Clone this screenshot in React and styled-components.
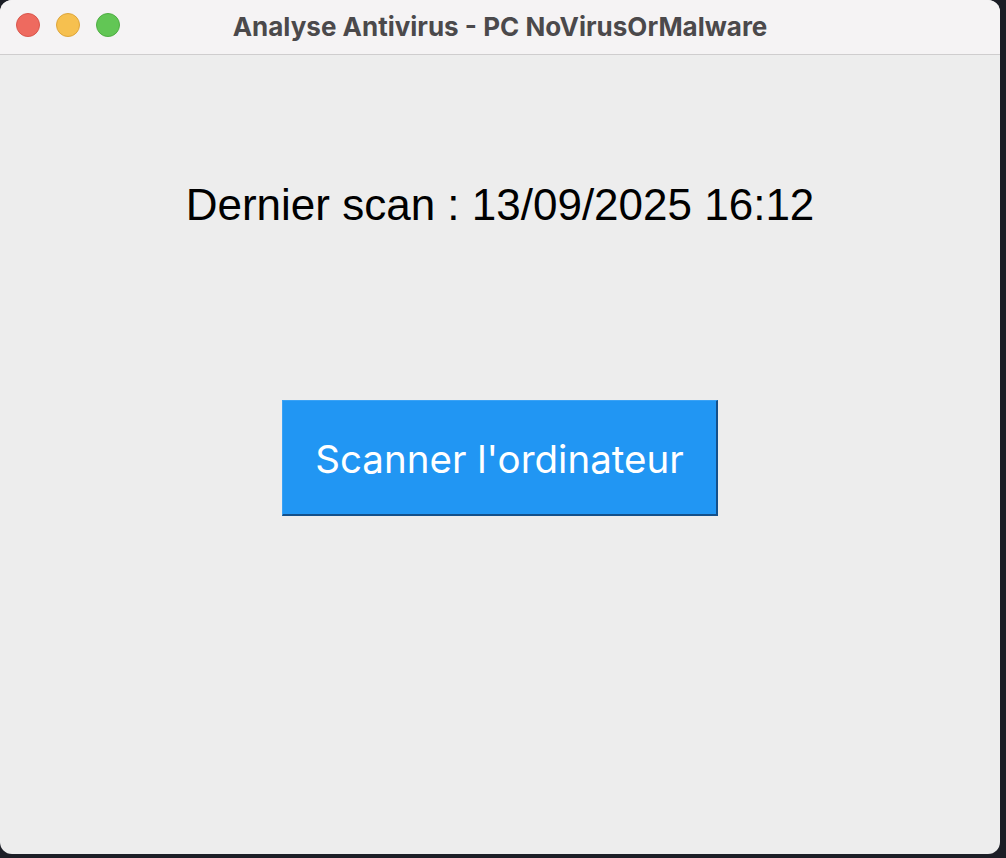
import styled, { createGlobalStyle } from 'styled-components';

const GlobalStyle = createGlobalStyle`
  html, body {
    margin: 0;
    padding: 0;
    background: #1c1e26;
  }
  body {
    width: 1006px;
    height: 858px;
    overflow: hidden;
  }
`;

const Window = styled.div`
  width: 1000px;
  height: 854px;
  border-radius: 12px;
  overflow: hidden;
  background: #ededed;
  display: flex;
  flex-direction: column;
`;

const TitleBar = styled.div`
  height: 54px;
  flex-shrink: 0;
  background: #f5f3f4;
  border-bottom: 1px solid #cfcdce;
  position: relative;
  display: flex;
  align-items: center;
  justify-content: center;
`;

const Lights = styled.div`
  position: absolute;
  left: 16px;
  top: 13px;
  display: flex;
  gap: 16px;
`;

const Light = styled.span`
  width: 24px;
  height: 24px;
  border-radius: 50%;
  box-sizing: border-box;
  background: ${(p) => p.color};
  border: 1px solid ${(p) => p.edge};
`;

const Title = styled.h1`
  margin: 0;
  font-family: Inter, 'Noto Sans', sans-serif;
  font-weight: 700;
  font-size: 26px;
  color: #4b494b;
  padding-bottom: 2px;
`;

const Content = styled.div`
  flex: 1;
  display: flex;
  flex-direction: column;
  align-items: center;
  padding-top: 125px;
`;

const LastScan = styled.div`
  font-family: 'Liberation Sans', Arial, sans-serif;
  font-size: 44px;
  line-height: 50px;
  color: #000;
`;

const ScanButton = styled.button`
  margin-top: 170px;
  width: 436px;
  height: 116px;
  box-sizing: border-box;
  background: #2196f3;
  border: none;
  border-top: 1px solid #3aa2f5;
  border-left: 1px solid #3aa2f5;
  border-right: 2px solid #14508a;
  border-bottom: 2px solid #14508a;
  color: #fff;
  font-family: Inter, 'Noto Sans', sans-serif;
  font-size: 38.5px;
  font-weight: 400;
  cursor: pointer;
  padding: 3px 0 0;
`;

const App = () => {
  return (
    <>
      <GlobalStyle />
      <Window>
        <TitleBar>
          <Lights>
            <Light color="#ee6a5f" edge="#d9564c" />
            <Light color="#f6c04f" edge="#dea63b" />
            <Light color="#62c655" edge="#4fae43" />
          </Lights>
          <Title>Analyse Antivirus - PC NoVirusOrMalware</Title>
        </TitleBar>
        <Content>
          <LastScan>Dernier scan : 13/09/2025 16:12</LastScan>
          <ScanButton>Scanner l'ordinateur</ScanButton>
        </Content>
      </Window>
    </>
  );
};

export default App;
